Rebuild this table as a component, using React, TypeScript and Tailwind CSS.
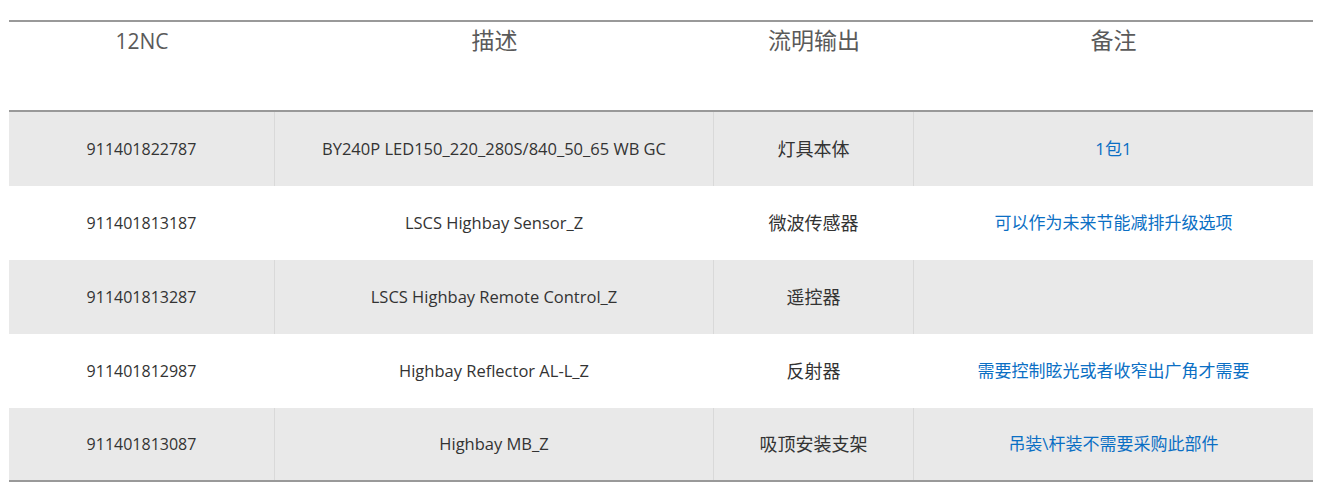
const rows = [
  { code: "911401822787", desc: "BY240P LED150_220_280S/840_50_65 WB GC", out: "灯具本体", note: "1包1" },
  { code: "911401813187", desc: "LSCS Highbay Sensor_Z", out: "微波传感器", note: "可以作为未来节能减排升级选项" },
  { code: "911401813287", desc: "LSCS Highbay Remote Control_Z", out: "遥控器", note: "" },
  { code: "911401812987", desc: "Highbay Reflector AL-L_Z", out: "反射器", note: "需要控制眩光或者收窄出广角才需要" },
  { code: "911401813087", desc: "Highbay MB_Z", out: "吸顶安装支架", note: "吊装\\杆装不需要采购此部件" },
]

const font = "font-['Open_Sans','Noto_Sans_CJK_SC',sans-serif]"

export default function App() {
  return (
    <div className={`min-h-screen bg-white pt-[20px] pl-[9px] ${font}`}>
      <div className="w-[1304px] border-t-2 border-b-2 border-[#999999]">
        <div className="grid grid-cols-[266px_439px_200px_399px] h-[90px] border-b-2 border-[#999999] text-[#5a5a5a]">
          <div className="text-center text-[21px] pt-[4px]">12NC</div>
          <div className="text-center text-[23px] pt-[1px]">描述</div>
          <div className="text-center text-[23px] pt-[1px]">流明输出</div>
          <div className="text-center text-[23px] pt-[1px]">备注</div>
        </div>
        {rows.map((r, i) => {
          const gray = i % 2 === 0
          const line = gray ? "border-r border-[#d9d9d9]" : "border-r border-white"
          return (
            <div
              key={r.code}
              className={`grid grid-cols-[266px_439px_200px_399px] ${i === rows.length - 1 ? "h-[72px]" : "h-[74px]"} ${gray ? "bg-[#e9e9e9]" : "bg-white"}`}
            >
              <div className={`flex items-center justify-center text-[16px] text-[#333333] ${line}`}>{r.code}</div>
              <div className={`flex items-center justify-center text-[16.5px] text-[#333333] ${line}`}>{r.desc}</div>
              <div className={`flex items-center justify-center text-[18px] text-[#333333] ${line}`}>{r.out}</div>
              <div className="flex items-center justify-center text-[17px] text-[#0b6fc4]">{r.note}</div>
            </div>
          )
        })}
      </div>
    </div>
  )
}
